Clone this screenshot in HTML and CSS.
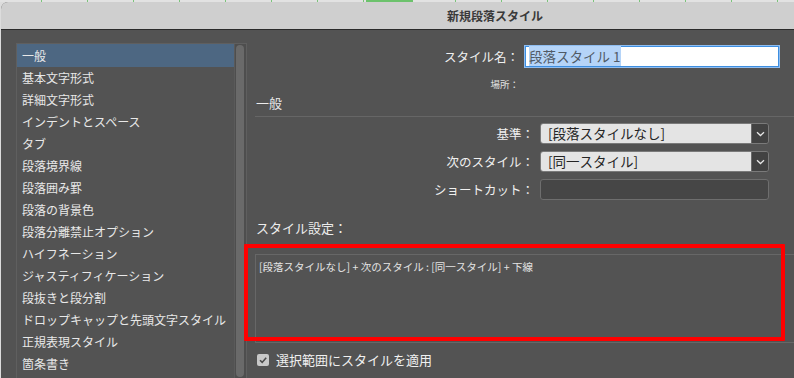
FILE: index.html
```html
<!DOCTYPE html>
<html lang="ja">
<head>
<meta charset="UTF-8">
<meta name="viewport" content="width=device-width, initial-scale=1.0">
<title>新規段落スタイル</title>
<link rel="stylesheet" href="styles.css">
</head>
<body>
<div class="ruler"></div>
<div class="window">
    <div class="titlebar">新規段落スタイル</div>
    <div class="dialog">
        <div class="listbox">
            <ul class="items">
                <li class="selected">一般</li>
                <li>基本文字形式</li>
                <li>詳細文字形式</li>
                <li>インデントとスペース</li>
                <li>タブ</li>
                <li>段落境界線</li>
                <li>段落囲み罫</li>
                <li>段落の背景色</li>
                <li>段落分離禁止オプション</li>
                <li>ハイフネーション</li>
                <li>ジャスティフィケーション</li>
                <li>段抜きと段分割</li>
                <li>ドロップキャップと先頭文字スタイル</li>
                <li>正規表現スタイル</li>
                <li>箇条書き</li>
            </ul>
            <div class="scrollbar"><div class="thumb"></div></div>
        </div>

        <div class="panel">
            <div class="name-row">
                <label for="styleName">スタイル名：</label>
                <div class="name-input" id="styleName"><span class="sel">段落スタイル 1</span></div>
            </div>
            <div class="place">場所：</div>
            <div class="section-title">一般</div>

            <div class="form">
                <label>基準：</label>
                <div class="select">
                    <span class="value">[段落スタイルなし]</span>
                    <span class="arrow"><svg width="9" height="6" viewBox="0 0 9 6"><path d="M1 1.2 L4.5 4.5 L8 1.2" fill="none" stroke="#e6e6e6" stroke-width="1.3"/></svg></span>
                </div>
                <label>次のスタイル：</label>
                <div class="select">
                    <span class="value">[同一スタイル]</span>
                    <span class="arrow"><svg width="9" height="6" viewBox="0 0 9 6"><path d="M1 1.2 L4.5 4.5 L8 1.2" fill="none" stroke="#e6e6e6" stroke-width="1.3"/></svg></span>
                </div>
                <label>ショートカット：</label>
                <div class="shortcut"></div>
            </div>

            <div class="settings-title">スタイル設定：</div>
            <div class="settings-wrap">
                <div class="settings">[段落スタイルなし] + 次のスタイル : [同一スタイル] + 下線</div>
                <div class="highlight"></div>
            </div>

            <div class="check-row">
                <span class="checkbox"><svg width="12" height="12" viewBox="0 0 12 12"><path d="M3 6.2 L5.2 8.4 L9.2 3.8" fill="none" stroke="#4a4a4a" stroke-width="1.6"/></svg></span>
                <span>選択範囲にスタイルを適用</span>
            </div>
        </div>
    </div>
</div>
</body>
</html>
```

FILE: styles.css
```css
html, body {
    margin: 0;
    padding: 0;
}

body {
    width: 794px;
    height: 378px;
    overflow: hidden;
    background-color: #dcdcdc;
    font-family: "Noto Sans CJK JP", "Noto Sans", sans-serif;
    color: #ececec;
}

.ruler {
    height: 2px;
    background-color: #e2e2e2;
    background-image:
        linear-gradient(#6cc26c, #6cc26c),
        repeating-linear-gradient(90deg, transparent 0, transparent 41px, #7ac47a 41px, #7ac47a 42px, transparent 42px, transparent 46px);
    background-size: 47px 2px, 100% 2px;
    background-position: 366px 0, 0 0;
    background-repeat: no-repeat, repeat;
}

.window {
    margin-left: 1px;
    height: 376px;
    display: flex;
    flex-direction: column;
    background-color: #535353;
    border-top-left-radius: 7px;
    overflow: hidden;
}

.titlebar {
    height: 27px;
    line-height: 27px;
    padding-left: 446px;
    background-color: #cfcfcf;
    border-bottom: 1px solid #2b2b2b;
    color: #3a3a3a;
    font-size: 12px;
    font-weight: bold;
}

.dialog {
    flex: 1;
    display: flex;
    padding: 13px 0 0 15px;
    min-height: 0;
}

/* left category list */
.listbox {
    width: 229px;
    height: 340px;
    border: 1px solid #5f5f5f;
    display: flex;
    background-color: #535353;
}

.items {
    list-style: none;
    margin: 0;
    padding: 0;
    flex: 1;
}

.items li {
    height: 22px;
    line-height: 22px;
    padding-left: 5px;
    font-size: 12px;
    color: #e8e8e8;
    white-space: nowrap;
}

.items li.selected {
    background-color: #4d6782;
    height: 23px;
    line-height: 23px;
}

.scrollbar {
    width: 12px;
    background-color: #4e4e4e;
    border-left: 1px solid #5a5a5a;
    padding: 1px 2px 0 1px;
    box-sizing: border-box;
}

.thumb {
    height: 332px;
    background-color: #6a6a6a;
    border-radius: 5px;
}

/* right side */
.panel {
    flex: 1;
    padding: 3px 0 0 8px;
    display: flex;
    flex-direction: column;
    font-size: 13px;
}

.name-row {
    display: grid;
    grid-template-columns: 264px 254px;
    column-gap: 6px;
    align-items: center;
}

.name-row label,
.form label {
    text-align: right;
    font-size: 12.5px;
    color: #f0f0f0;
}

.name-input {
    height: 21px;
    box-sizing: border-box;
    background-color: #fff;
    border: 1px solid #3d8ee0;
    box-shadow: 0 0 0 1px #8fbdf0;
    padding-left: 3px;
    line-height: 19px;
    font-size: 13.5px;
    color: #505a66;
}

.name-input .sel {
    background-color: #b5d4f8;
}

.place {
    width: 264px;
    margin-top: 11px;
    text-align: right;
    font-size: 9.5px;
    line-height: 12px;
    color: #e2e2e2;
}

.section-title {
    margin-top: 4px;
    padding-left: 1px;
    line-height: 18px;
    padding-bottom: 4px;
    border-bottom: 1px solid #666;
    font-size: 13px;
}

.form {
    margin-top: 6px;
    display: grid;
    grid-template-columns: 279px 229px;
    column-gap: 6px;
    row-gap: 7px;
    align-items: center;
}

.select {
    height: 21px;
    box-sizing: border-box;
    display: flex;
    border: 1px solid #7a7a7a;
    border-radius: 3px;
    overflow: hidden;
}

.select .value {
    flex: 1;
    background-color: #e4e4e4;
    color: #252525;
    padding-left: 7px;
    line-height: 19px;
    font-size: 13.5px;
}

.select .arrow {
    width: 16px;
    background-color: #424242;
    border-left: 1px solid #6a6a6a;
    display: flex;
    align-items: center;
    justify-content: center;
}

.shortcut {
    height: 21px;
    box-sizing: border-box;
    background-color: #464646;
    border: 1px solid #6e6e6e;
    border-radius: 3px;
}

.settings-title {
    margin-top: 19px;
    padding-left: 1px;
    line-height: 18px;
    font-size: 13px;
}

.settings-wrap {
    position: relative;
    margin-top: 17px;
}

.settings {
    height: 89px;
    box-sizing: border-box;
    border: 1px solid #676767;
    border-right: none;
    padding: 4px 0 0 3px;
    font-size: 10.5px;
    color: #e4e4e4;
}

.highlight {
    position: absolute;
    left: -11px;
    top: -10px;
    width: 533px;
    height: 89px;
    border: 4px solid #ff0000;
    border-radius: 1px;
}

.check-row {
    margin-top: 7px;
    display: flex;
    align-items: center;
    gap: 7px;
    padding-left: 2px;
    font-size: 13px;
    color: #f0f0f0;
}

.checkbox {
    width: 12px;
    height: 12px;
    background-color: #c8c8c8;
    border-radius: 2px;
    display: flex;
}
```
